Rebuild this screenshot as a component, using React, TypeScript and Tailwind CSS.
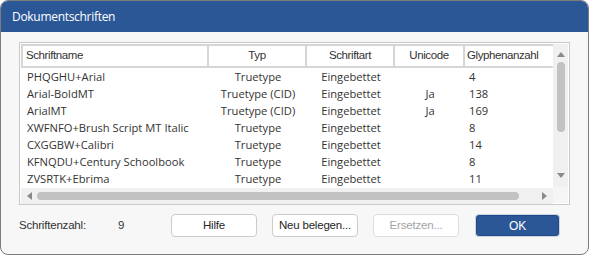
import React from "react";

type FontRow = {
  name: string;
  typ: string;
  art: string;
  unicode: string;
  glyphs: string;
};

const rows: FontRow[] = [
  { name: "PHQGHU+Arial", typ: "Truetype", art: "Eingebettet", unicode: "", glyphs: "4" },
  { name: "Arial-BoldMT", typ: "Truetype (CID)", art: "Eingebettet", unicode: "Ja", glyphs: "138" },
  { name: "ArialMT", typ: "Truetype (CID)", art: "Eingebettet", unicode: "Ja", glyphs: "169" },
  { name: "XWFNFO+Brush Script MT Italic", typ: "Truetype", art: "Eingebettet", unicode: "", glyphs: "8" },
  { name: "CXGGBW+Calibri", typ: "Truetype", art: "Eingebettet", unicode: "", glyphs: "14" },
  { name: "KFNQDU+Century Schoolbook", typ: "Truetype", art: "Eingebettet", unicode: "", glyphs: "8" },
  { name: "ZVSRTK+Ebrima", typ: "Truetype", art: "Eingebettet", unicode: "", glyphs: "11" },
];

const cols = "grid grid-cols-[188px_98px_88px_70px_88px]";

function Arrow({ dir }: { dir: "up" | "down" | "left" | "right" }) {
  const pts = {
    up: "0,5 4,0 8,5",
    down: "0,0 8,0 4,5",
    left: "5,0 5,8 0,4",
    right: "0,0 0,8 5,4",
  }[dir];
  const vertical = dir === "up" || dir === "down";
  return (
    <svg width={vertical ? 8 : 5} height={vertical ? 5 : 8} viewBox={vertical ? "0 0 8 5" : "0 0 5 8"}>
      <polygon points={pts} fill="#8a8a8a" />
    </svg>
  );
}

function Button({ label, variant = "default" }: { label: string; variant?: "default" | "disabled" | "primary" }) {
  return (
    <button
      type="button"
      className={
        variant === "primary"
          ? "h-[23px] w-[85px] rounded-[4px] border border-[#cfd6e0] bg-[#2b5797] text-[12px] text-white shadow-[inset_0_0_0_1px_#1f4a8a]"
          : variant === "disabled"
            ? "h-[23px] w-[86px] rounded-[4px] border border-[#dcdcdc] bg-white text-[11.5px] tracking-[-0.2px] text-[#a3a3a3]"
            : "h-[23px] w-[86px] rounded-[4px] border border-[#cccccc] bg-white text-[11.5px] tracking-[-0.2px] text-[#262626]"
      }
    >
      {label}
    </button>
  );
}

export default function App() {
  return (
    <div className="h-[255px] w-[589px] bg-white font-['Open_Sans',sans-serif]">
      <div className="flex h-full w-full flex-col overflow-hidden rounded-[8px] border border-[#7c7c7c] bg-[#f7f7f7]">
        <div className="flex h-[31px] shrink-0 items-center bg-[#2b5797] pl-[11px] text-[12px] tracking-[-0.3px] text-white">
          Dokumentschriften
        </div>

        <div className="px-[18px] pt-[10px]">
          <div className="flex h-[163px] border border-[#c9c9c9] bg-white p-[1px]">
            <div className="flex w-[532px] flex-col">
              <div className={`${cols} h-[24px] shrink-0 border-b-2 border-[#d6d6d6] font-['Liberation_Sans',sans-serif] text-[11.5px] tracking-[-0.4px] text-[#333]`}>
                <div className="flex items-center border-l-2 border-t-2 border-r-2 border-[#d6d6d6] pl-[3px]">Schriftname</div>
                <div className="flex items-center justify-center border-t-2 border-r-2 border-[#d6d6d6]">Typ</div>
                <div className="flex items-center justify-center border-t-2 border-r-2 border-[#d6d6d6]">Schriftart</div>
                <div className="flex items-center justify-center border-t-2 border-r-2 border-[#d6d6d6]">Unicode</div>
                <div className="flex items-center overflow-hidden whitespace-nowrap border-t-2 border-[#d6d6d6] pl-[2px]">Glyphenanzahl</div>
              </div>

              <div className="flex-1 pt-[1px] text-[11.2px] text-[#333]">
                {rows.map((r) => (
                  <div key={r.name} className={`${cols} h-[17px] items-center whitespace-nowrap`}>
                    <div className="pl-[6px]">{r.name}</div>
                    <div className="text-center">{r.typ}</div>
                    <div className="text-center">{r.art}</div>
                    <div className="text-center">{r.unicode}</div>
                    <div className="pl-[4px]">{r.glyphs}</div>
                  </div>
                ))}
              </div>

              <div className="flex h-[16px] shrink-0 items-center bg-[#f0f0f0] px-[6px]">
                <Arrow dir="left" />
                <div className="ml-[5px] h-[8px] w-[482px] rounded-full bg-[#c2c2c2]" />
                <div className="ml-auto">
                  <Arrow dir="right" />
                </div>
              </div>
            </div>

            <div className="flex w-[17px] flex-col items-center bg-[#f0f0f0]">
              <div className="pt-[8px]">
                <Arrow dir="up" />
              </div>
              <div className="mt-[5px] h-[70px] w-[8px] rounded-full bg-[#c2c2c2]" />
              <div className="mt-[41px]">
                <Arrow dir="down" />
              </div>
              <div className="mt-auto h-[16px] w-full bg-[#f5f5f5]" />
            </div>
          </div>

          <div className="mt-[9px] flex items-center font-['Liberation_Sans',sans-serif] text-[11.5px] tracking-[-0.2px] text-[#333]">
            <div className="w-[99px]">Schriftenzahl:</div>
            <div className="w-[53px]">9</div>
            <div className="flex gap-[15px]">
              <Button label="Hilfe" />
              <Button label="Neu belegen..." />
              <Button label="Ersetzen..." variant="disabled" />
              <div className="ml-[1px]">
                <Button label="OK" variant="primary" />
              </div>
            </div>
          </div>
        </div>
      </div>
    </div>
  );
}
